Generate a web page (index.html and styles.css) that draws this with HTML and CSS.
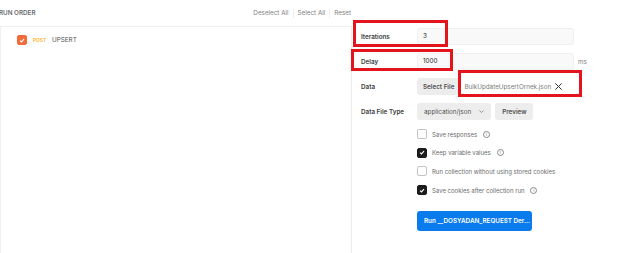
FILE: index.html
```html
<!DOCTYPE html>
<html lang="en">
<head>
  <meta charset="UTF-8" />
  <title>Collection Runner</title>
  <link rel="stylesheet" href="styles.css">
</head>
<body>
  <div class="runner">
    <div class="run-order">
      <div class="order-head">
        <span class="order-title">RUN ORDER</span>
        <div class="order-actions">
          <span>Deselect All</span>
          <span class="sep"></span>
          <span>Select All</span>
          <span class="sep"></span>
          <span>Reset</span>
        </div>
      </div>
      <div class="order-list">
        <div class="request-row">
          <span class="box box-orange">
            <svg viewBox="0 0 10 10" width="10" height="10"><path d="M2.6 5.2l1.7 1.6 3.2-3.4" fill="none" stroke="#fff" stroke-width="1.4"/></svg>
          </span>
          <span class="method">POST</span>
          <span class="req-name">UPSERT</span>
        </div>
      </div>
    </div>

    <div class="settings">
      <div class="field">
        <span class="label">Iterations</span>
        <div class="input">3</div>
      </div>
      <div class="field">
        <span class="label">Delay</span>
        <div class="input">1000</div>
        <span class="unit">ms</span>
      </div>
      <div class="field">
        <span class="label">Data</span>
        <div class="btn btn-file">Select File</div>
        <span class="file-name">BulkUpdateUpsertOrnek.json</span>
        <svg class="file-x" viewBox="0 0 10 10" width="9" height="9"><path d="M1.5 1.5l7 7M8.5 1.5l-7 7" stroke="#333" stroke-width="1.1"/></svg>
      </div>
      <div class="field">
        <span class="label">Data File Type</span>
        <div class="btn btn-select">application/json
          <svg viewBox="0 0 10 10" width="7" height="7"><path d="M2 3.5l3 3 3-3" fill="none" stroke="#6b6b6b" stroke-width="1"/></svg>
        </div>
        <div class="btn btn-preview">Preview</div>
      </div>

      <div class="checks">
        <div class="check">
          <span class="box"></span>
          <span>Save responses</span>
          <span class="info">i</span>
        </div>
        <div class="check">
          <span class="box box-dark">
            <svg viewBox="0 0 10 10" width="10" height="10"><path d="M2.6 5.2l1.7 1.6 3.2-3.4" fill="none" stroke="#fff" stroke-width="1.4"/></svg>
          </span>
          <span>Keep variable values</span>
          <span class="info">i</span>
        </div>
        <div class="check">
          <span class="box"></span>
          <span>Run collection without using stored cookies</span>
        </div>
        <div class="check">
          <span class="box box-dark">
            <svg viewBox="0 0 10 10" width="10" height="10"><path d="M2.6 5.2l1.7 1.6 3.2-3.4" fill="none" stroke="#fff" stroke-width="1.4"/></svg>
          </span>
          <span>Save cookies after collection run</span>
          <span class="info">i</span>
        </div>
      </div>

      <div class="run-btn">Run __DOSYADAN_REQUEST Der...</div>
    </div>
  </div>

  <div class="mark mark-iter"></div>
  <div class="mark mark-delay"></div>
  <div class="mark mark-data"></div>
</body>
</html>
```

FILE: styles.css
```css
body {
  margin: 0;
  background: #fff;
  font-family: 'Inter', sans-serif;
  font-size: 6.3px;
  color: #505050;
}

.runner {
  display: flex;
  height: 253px;
}

.run-order {
  width: 352px;
  display: flex;
  flex-direction: column;
}

.order-head {
  height: 26px;
  display: flex;
  align-items: center;
  justify-content: space-between;
  padding-right: 1px;
}

.order-title {
  font-weight: 600;
  color: #6b6b6b;
  margin-left: -1px;
}

.order-actions {
  display: flex;
  align-items: center;
  gap: 4px;
  color: #808080;
}

.sep {
  width: 1px;
  height: 9px;
  background: #ededed;
}

.order-list {
  flex: 1;
  border-top: 1px solid #f0f0f0;
  border-left: 1px solid #f0f0f0;
  border-right: 1px solid #ededed;
}

.request-row {
  display: flex;
  align-items: center;
  height: 26px;
  padding-left: 16px;
}

.box {
  width: 8px;
  height: 8px;
  border: 1px solid #c4c4c4;
  border-radius: 2px;
  display: flex;
  align-items: center;
  justify-content: center;
  flex-shrink: 0;
}

.box svg {
  width: 9px;
  height: 9px;
}

.box-orange {
  background: #f26b3a;
  border-color: #f26b3a;
}

.box-dark {
  background: #1c1c1c;
  border-color: #1c1c1c;
}

.method {
  margin-left: 6px;
  font-size: 4.8px;
  font-weight: 600;
  color: #ffb020;
}

.req-name {
  margin-left: 6px;
  color: #505050;
}

.settings {
  flex: 1;
  padding: 28px 0 0 9px;
}

.field {
  display: flex;
  align-items: center;
  height: 17px;
  margin-bottom: 8px;
}

.label {
  width: 56px;
  flex-shrink: 0;
  font-weight: 600;
  color: #3c3c3c;
}

.input {
  width: 145px;
  height: 15px;
  line-height: 15px;
  padding: 0 5px;
  background: #f9f9f9;
  border: 1px solid #f0f0f0;
  border-radius: 3px;
  color: #212121;
}

.unit {
  margin-left: 4px;
  color: #808080;
}

.btn {
  height: 17px;
  display: flex;
  align-items: center;
  padding: 0 7px;
  background: #ededed;
  border-radius: 3px;
  font-weight: 600;
  color: #505050;
  white-space: nowrap;
}

.btn-file {
  padding: 0 6px;
}

.file-name {
  margin-left: 4px;
  color: #7a7a7a;
}

.file-x {
  margin-left: 3px;
}

.btn-select {
  font-weight: 400;
  gap: 7px;
  padding: 0 6px 0 7px;
}

.btn-preview {
  margin-left: 4px;
}

.checks {
  margin-top: -3px;
  padding-left: 56px;
}

.check {
  display: flex;
  align-items: center;
  gap: 5px;
  height: 18.6px;
  font-size: 6px;
  color: #6b6b6b;
}

.info {
  width: 5px;
  height: 5px;
  border: 0.8px solid #8a8a8a;
  border-radius: 50%;
  font-size: 4px;
  line-height: 5px;
  text-align: center;
  color: #6b6b6b;
  margin-left: 1px;
}

.run-btn {
  margin: 12px 0 0 56px;
  width: 101px;
  height: 20px;
  line-height: 20px;
  padding: 0 7px;
  background: #097bed;
  border-radius: 3px;
  color: #fff;
  font-weight: 600;
  white-space: nowrap;
}

.mark {
  position: absolute;
  border: 3px solid #e3141c;
}

.mark-iter {
  left: 353px;
  top: 20px;
  width: 89px;
  height: 21px;
}

.mark-delay {
  left: 351px;
  top: 49px;
  width: 96px;
  height: 16px;
}

.mark-data {
  left: 458px;
  top: 70px;
  width: 118px;
  height: 21px;
}
```
